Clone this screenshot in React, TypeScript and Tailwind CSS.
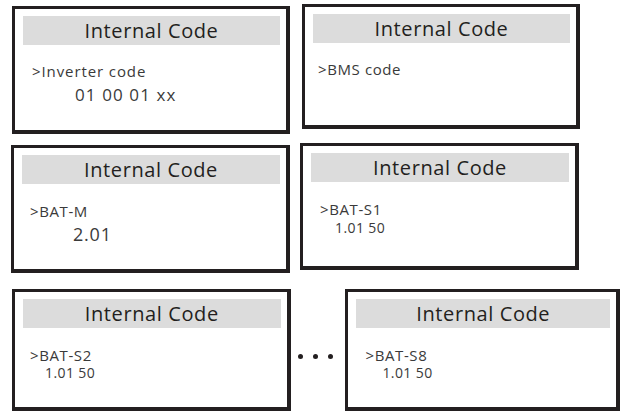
import React from 'react';

type ScreenProps = {
  className: string;
  label: string;
  value?: string;
  valueClass?: string;
  labelClass?: string;
};

// One LCD menu screen: grey title bar, then a label line and an optional value line
const Screen: React.FC<ScreenProps> = ({ className, label, value, valueClass, labelClass }) => (
  <div
    className={`box-border flex flex-col border-t-[3px] border-l-[3px] border-r-4 border-b-4 border-[#231f20] bg-white pl-2 pr-1.5 pt-[7px] ${className}`}
  >
    <div className="flex h-[29px] items-center justify-center bg-[#dcdcdc] text-[20px] tracking-[0.6px] text-[#231f20]">
      Internal Code
    </div>
    <div className={`text-[#3a3a3a] ${labelClass ?? ''}`}>{label}</div>
    {value && <div className={`text-[#3a3a3a] ${valueClass ?? ''}`}>{value}</div>}
  </div>
);

const App: React.FC = () => {
  return (
    <div className="h-[412px] w-[620px] overflow-hidden bg-white font-['Open_Sans',sans-serif]">
      {/* Row 1 */}
      <div className="flex h-[141px] items-start">
        <Screen
          className="ml-3 mt-1.5 h-[128px] w-[278px]"
          label=">Inverter code"
          labelClass="mt-[17px] ml-[9px] text-[15px] leading-[18px] tracking-[0.9px]"
          value="01 00 01 xx"
          valueClass="mt-[5px] ml-[52px] text-[17px] leading-[20px] tracking-[1.1px]"
        />
        <Screen
          className="ml-3 mt-1 h-[125px] w-[278px]"
          label=">BMS code"
          labelClass="mt-[17px] ml-[5px] text-[15px] leading-[18px] tracking-[0.6px]"
        />
      </div>

      {/* Row 2 */}
      <div className="flex h-[148px] items-start">
        <Screen
          className="ml-[11px] mt-1 h-[128px] w-[279px]"
          label=">BAT-M"
          labelClass="mt-[18px] ml-[8px] text-[15px] leading-[18px] tracking-[0.6px]"
          value="2.01"
          valueClass="mt-[3px] ml-[51px] text-[18px] leading-[22px] tracking-[0.8px]"
        />
        <Screen
          className="ml-2.5 mt-0.5 h-[127px] w-[279px]"
          label=">BAT-S1"
          labelClass="mt-[18px] ml-[9px] text-[15px] leading-[18px] tracking-[0.6px]"
          value="1.01 50"
          valueClass="mt-[1px] ml-[24px] text-[14px] leading-[18px] tracking-[0.4px]"
        />
      </div>

      {/* Row 3 */}
      <div className="flex items-start">
        <Screen
          className="ml-3 h-[122px] w-[279px]"
          label=">BAT-S2"
          labelClass="mt-[18px] ml-[7px] text-[15px] leading-[18px] tracking-[0.6px]"
          value="1.01 50"
          valueClass="mt-[0px] ml-[22px] text-[14px] leading-[18px] tracking-[0.4px]"
        />
        <div className="flex h-[122px] w-[55px] items-center gap-[10px] pl-[7px] pt-[12px]">
          <span className="h-[5px] w-[5px] rounded-full bg-[#231f20]" />
          <span className="h-[5px] w-[5px] rounded-full bg-[#231f20]" />
          <span className="h-[5px] w-[5px] rounded-full bg-[#231f20]" />
        </div>
        <Screen
          className="h-[122px] w-[275px]"
          label=">BAT-S8"
          labelClass="mt-[18px] ml-[9px] text-[15px] leading-[18px] tracking-[0.6px]"
          value="1.01 50"
          valueClass="mt-[0px] ml-[26px] text-[14px] leading-[18px] tracking-[0.4px]"
        />
      </div>
    </div>
  );
};

export default App;
